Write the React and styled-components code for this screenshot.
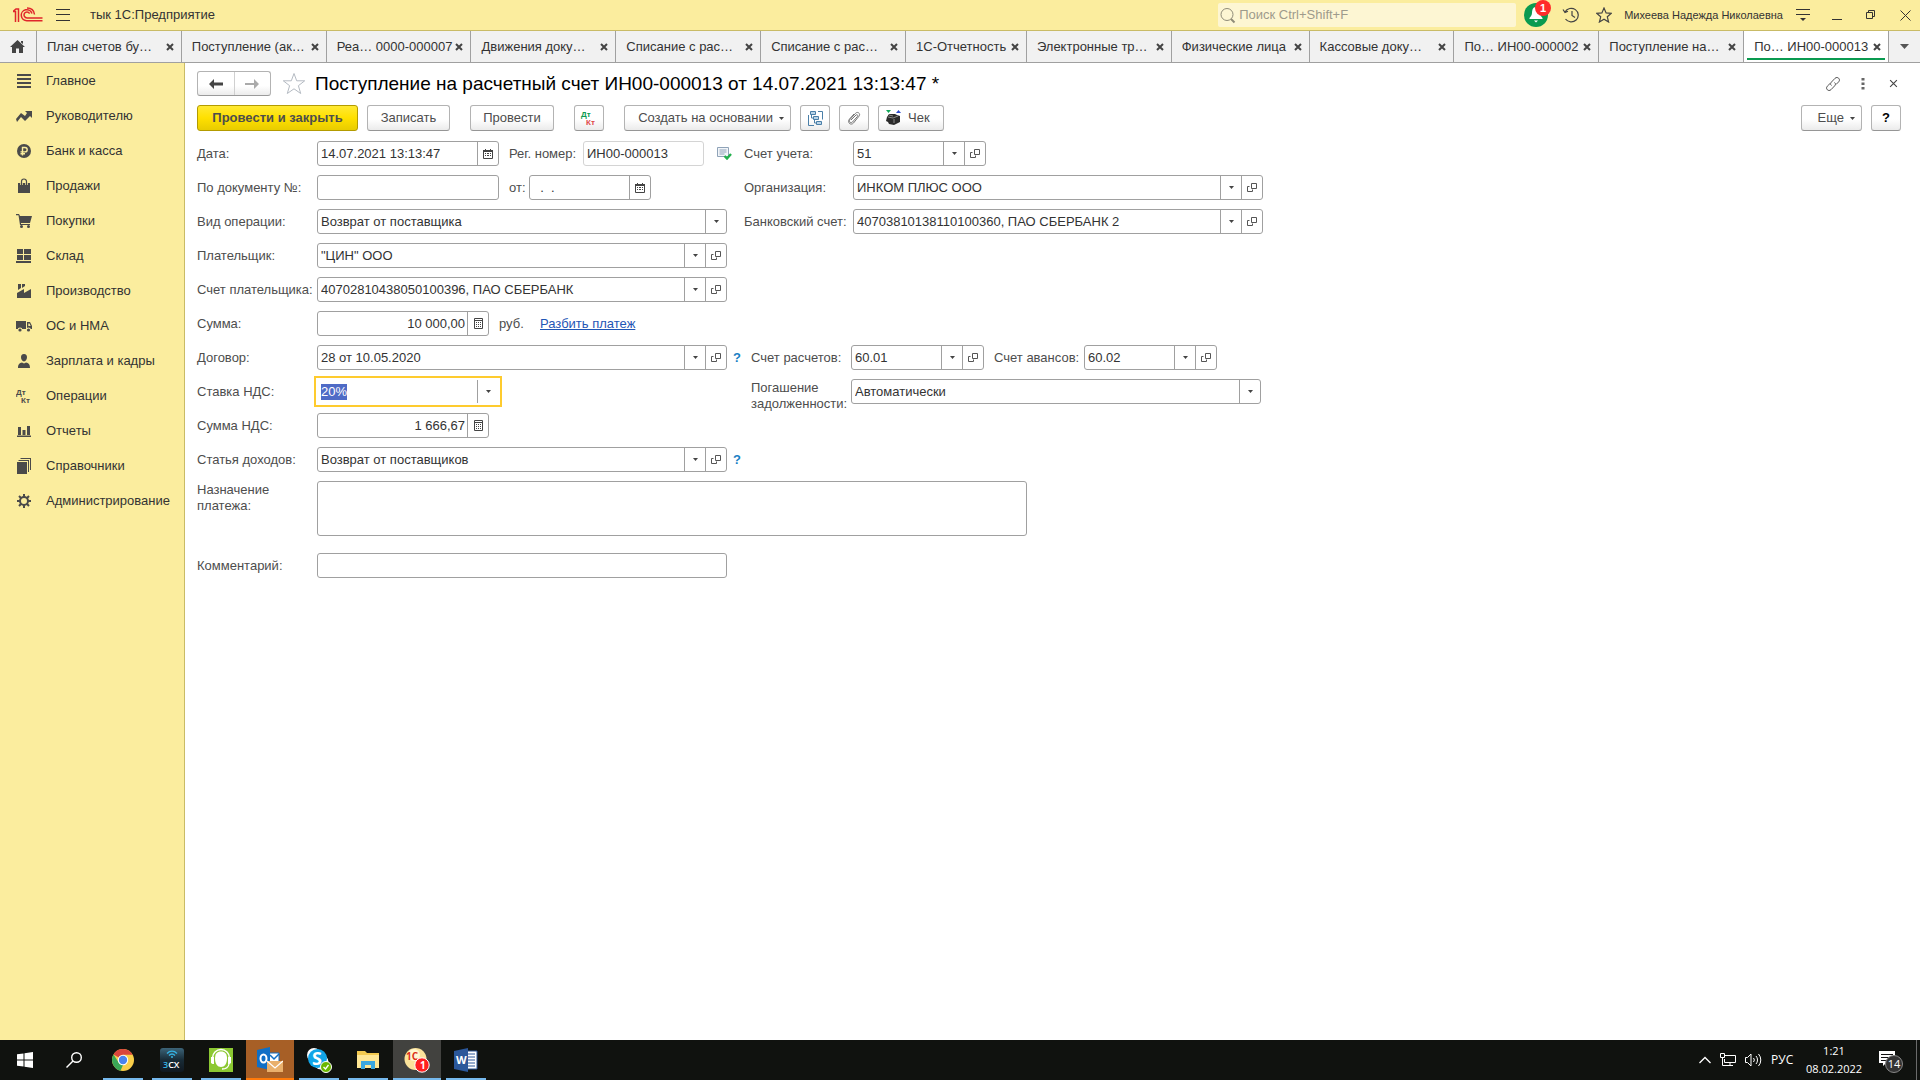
import React, { useEffect, useRef } from 'react'
import styled, { createGlobalStyle, ThemeProvider } from 'styled-components'

const theme = {
  colors: {
    yellow: '#fbed9e',
    yellowLine: '#c9bb66',
    search: '#fdf6d3',
    tab: '#f1f1f1',
    line: '#a0a0a0',
    lineLight: '#d4d4d4',
    text: '#333333',
    label: '#4d4d4d',
    icon: '#4a4a4a',
    link: '#1f56b5',
    green: '#0a9a50',
    red: '#ff2b2b',
    focus: '#fecb2e'
  }
}

const tabs = [
  { title: 'План счетов бу…', size: 145 },
  { title: 'Поступление (ак…', size: 145 },
  { title: 'Реа… 0000-000007', size: 145 },
  { title: 'Движения доку…', size: 145 },
  { title: 'Списание с рас…', size: 145 },
  { title: 'Списание с рас…', size: 145 },
  { title: '1С-Отчетность', size: 121 },
  { title: 'Электронные тр…', size: 145 },
  { title: 'Физические лица', size: 138 },
  { title: 'Кассовые доку…', size: 145 },
  { title: 'По… ИН00-000002', size: 145 },
  { title: 'Поступление на…', size: 145 },
  { title: 'По… ИН00-000013', size: 145, active: true }
]

const sections = [
  { title: 'Главное', icon: <path d='M1 1h14v2H1zM1 5h14v2H1zM1 9h14v2H1zM1 13h14v2H1z' /> },
  { title: 'Руководителю', icon: <path d='M0 11l5-6 4 3 2-3-2-2h7v7l-2-2-5 5-4-4-4 5z' /> },
  {
    title: 'Банк и касса',
    icon: (
      <>
        <circle cx='8' cy='8' r='7' />
        <path d='M6.500 12.500V4.500h2.500a2.200 2.200 0 0 1 0 4.400H4.500M4.500 10.800h4.500' fill='none' stroke='#fbed9e' strokeWidth='1.400' />
      </>
    )
  },
  {
    title: 'Продажи',
    icon: (
      <>
        <path d='M2 5h12v10H2z' />
        <path d='M5.500 7V3.500a2.500 2.500 0 0 1 5 0V7' fill='none' stroke='#fbed9e' strokeWidth='2.600' />
        <path d='M5.500 7V3.500a2.500 2.500 0 0 1 5 0V7' fill='none' stroke='#4a4a4a' strokeWidth='1.200' />
      </>
    )
  },
  {
    title: 'Покупки',
    icon: (
      <>
        <path d='M0 1h3l1 2h12l-2 7H5v1h9v1H4L2.500 2.200H0z' />
        <circle cx='5.500' cy='13.500' r='1.500' />
        <circle cx='12.500' cy='13.500' r='1.500' />
      </>
    )
  },
  { title: 'Склад', icon: <path d='M1 1h6v5H1zM8 1h7v5H8zM1 7h6v5H1zM8 7h7v5H8zM0 13h15v2H0z' /> },
  { title: 'Производство', icon: <path d='M1 15v-5l7-4v4l7-4v9zM2 1h3v4L2 7zM6 1h3v2L6 5z' /> },
  {
    title: 'ОС и НМА',
    icon: (
      <>
        <path d='M0 3h10v8H0zM11 4h3l2 4v3h-5z' />
        <circle cx='4' cy='12' r='2.400' fill='#fbed9e' />
        <circle cx='12.500' cy='12' r='2.400' fill='#fbed9e' />
        <circle cx='4' cy='12' r='1.600' />
        <circle cx='12.500' cy='12' r='1.600' />
        <path d='M12.300 5.500h1.200l1.200 2.500h-2.400z' fill='#fbed9e' />
      </>
    )
  },
  { title: 'Зарплата и кадры', icon: <path d='M8 1c2.200 0 3 1.500 3 3.300S9.800 8.500 8 8.500 5 6.200 5 4.300 5.800 1 8 1zM2 15c0-4 1.500-5 4-5.500l2 1 2-1c2.500.5 4 1.500 4 5.500z' /> },
  {
    title: 'Операции',
    icon: (
      <>
        <text x='0' y='7' fontSize='8' fontWeight='700'>Дт</text>
        <text x='5' y='15' fontSize='8' fontWeight='700'>Кт</text>
      </>
    )
  },
  { title: 'Отчеты', icon: <path d='M2 4h3v8H2zM6.500 7h3v5h-3zM11 3h3v9h-3zM1 12.500h14V14H1z' /> },
  { title: 'Справочники', icon: <path d='M1 4h10v12H1zM2.500 2h10.500v12h-1V3H2.500zM4.500 0H15v12h-1V1H4.500z' /> },
  {
    title: 'Администрирование',
    icon: (
      <>
        <circle cx='8' cy='8' r='4' fill='none' stroke='#4a4a4a' strokeWidth='2' />
        <path d='M8 1v3M8 12v3M1 8h3M12 8h3M3 3l2.200 2.200M10.800 10.800L13 13M3 13l2.200-2.200M10.800 5.200L13 3' stroke='#4a4a4a' strokeWidth='2' />
      </>
    )
  }
]

const ArrowDown = () => (
  <svg width='5' height='3' viewBox='0 0 5 3'><path d='M0 0h5L2.500 3z' fill='#444' /></svg>
)

const OpenIcon = () => (
  <svg width='11' height='11' viewBox='0 0 11 11' fill='none' stroke='#555'>
    <path d='M4.500 1.500h5v5h-5zM2.500 4.500h-2v5h5v-2' />
  </svg>
)

const CalendarIcon = () => (
  <svg width='10' height='10' viewBox='0 0 10 10'>
    <path d='M.5 2.500h9v7h-9z' fill='#fff' stroke='#444' />
    <path d='M0 1h10v2H0zM2 0h1v2H2zM7 0h1v2H7zM2 4h1v1H2zM4 4h2v1H4zM7 4h1v1H7zM2 6h1v1H2zM4 6h2v1H4zM7 6h1v1H7z' fill='#444' />
  </svg>
)

const CalcIcon = () => (
  <svg width='9' height='11' viewBox='0 0 9 11'>
    <path d='M.5.5h8v10h-8zM.5 2.500h8' fill='none' stroke='#444' />
    <path d='M2 4h1v1H2zM4 4h1v1H4zM6 4h1v1H6zM2 6h1v1H2zM4 6h1v1H4zM6 6h1v1H6zM2 8h1v1H2zM4 8h1v1H4zM6 8h1v1H6z' fill='#444' />
  </svg>
)

const CrossIcon = ({ size = 8, weight = 2 }) => (
  <svg width={size} height={size} viewBox='0 0 8 8'>
    <path d='M1 1l6 6M7 1L1 7' stroke='#444' strokeWidth={weight} />
  </svg>
)

const buttonIcons = {
  list: ['Выбрать', <ArrowDown />],
  open: ['Открыть', <OpenIcon />],
  date: ['Календарь', <CalendarIcon />],
  calc: ['Калькулятор', <CalcIcon />]
}

const Field = ({ id, label, labelWidth, width, value = '', right, muted, buttons = [] }) => (
  <>
    <Label htmlFor={id} $width={labelWidth}>{label}</Label>
    <FieldBox $width={width} $muted={muted}>
      <FieldInput id={id} defaultValue={value} $right={right} readOnly={muted} />
      {
        buttons.map(key => (
          <FieldButton key={key} type='button' aria-label={buttonIcons[key][0]}>
            {buttonIcons[key][1]}
          </FieldButton>
        ))
      }
    </FieldBox>
  </>
)

const Choice = ({ id, label, labelWidth, width, value }) => (
  <>
    <Label htmlFor={id} $width={labelWidth}>{label}</Label>
    <FieldBox $width={width}>
      <FieldSelect id={id} defaultValue={value}>
        <option>{value}</option>
      </FieldSelect>
      <SelectMark><ArrowDown /></SelectMark>
    </FieldBox>
  </>
)

const VatRate = () => {
  const input = useRef(null)

  useEffect(() => {
    input.current.focus()
    input.current.select()
  }, [])

  return (
    <>
      <Label htmlFor='vat' $width={120}>Ставка НДС:</Label>
      <FieldBox $width={182} $focused>
        <FieldInput id='vat' ref={input} defaultValue='20%' />
        <FieldButton type='button' aria-label='Выбрать'><ArrowDown /></FieldButton>
      </FieldBox>
    </>
  )
}

const TopBar = () => (
  <TopRow>
    <svg width='30' height='16' viewBox='0 0 30 16' fill='none' stroke='#e0262b' strokeWidth='1.500'>
      <path d='M0 4.500h2.500v10.500M0 4.500L3 2h2.500v13' />
      <path d='M19 6.500A5.500 5.500 0 1 0 14 13.700h15.500M16.600 6.500A3 3 0 1 0 14 11h15.500' />
      <path d='M21.500 7.500C21 3.500 18 1 14 1' />
    </svg>
    <MenuButton type='button' aria-label='Меню'>
      <svg width='14' height='12' viewBox='0 0 14 12'><path d='M0 .5h14M0 5.500h14M0 11.500h14' stroke='#333' /></svg>
    </MenuButton>
    <AppName>тык 1С:Предприятие</AppName>
    <SearchBox>
      <svg width='17' height='17' viewBox='0 0 17 17' fill='none' stroke='#8f8b78'>
        <circle cx='8' cy='7.500' r='6' />
        <path d='M12 12l3.500 3.500' strokeWidth='2' />
      </svg>
      <SearchInput type='text' aria-label='Поиск' placeholder='Поиск Ctrl+Shift+F' />
    </SearchBox>
    <TopIcons>
      <TopButton type='button' aria-label='Уведомления'>
        <svg width='28' height='28' viewBox='0 0 28 28'>
          <circle cx='14' cy='14' r='12' fill='#0a9a50' />
          <path d='M14 6c3.500 0 3.800 3.500 4 6 .2 2.500 1.500 3.500 2.500 5v1h-13v-1c1-1.500 2.300-2.500 2.500-5 .2-2.500.5-6 4-6zM12 19.500h4l-2 2z' fill='#fff' />
        </svg>
        <BellBadge>1</BellBadge>
      </TopButton>
      <TopButton type='button' aria-label='История'>
        <svg width='17' height='16' viewBox='0 0 17 16' fill='none' stroke='#444' strokeWidth='1.200'>
          <path d='M3 5a7 6.800 0 1 1 .5 7M1 2.500L3 5.500l3-1.300M10 4v4.500l3 2' />
        </svg>
      </TopButton>
      <TopButton type='button' aria-label='Избранное'>
        <svg width='16' height='16' viewBox='0 0 16 16' fill='none' stroke='#444' strokeWidth='1.200'>
          <path d='M8 1l2.100 4.900 5.200.4-4 3.500 1.300 5.200L8 12.200 3.400 15l1.300-5.200-4-3.500 5.200-.4z' />
        </svg>
      </TopButton>
    </TopIcons>
    <UserName>Михеева Надежда Николаевна</UserName>
    <TopIcons>
      <TopButton type='button' aria-label='Настройки'>
        <svg width='14' height='14' viewBox='0 0 14 14'><path d='M0 1.500h14M0 6.500h14' stroke='#333' strokeWidth='1.200' /><path d='M4 10h6l-3 3z' fill='#333' /></svg>
      </TopButton>
      <TopButton type='button' aria-label='Свернуть'>
        <svg width='10' height='12' viewBox='0 0 10 12'><path d='M0 10.500h10' stroke='#333' /></svg>
      </TopButton>
      <TopButton type='button' aria-label='Развернуть'>
        <svg width='10' height='10' viewBox='0 0 10 10' fill='none' stroke='#333'><path d='M.5 2.500h6v6h-6zM2.500 2.500v-2h6v6h-2' /></svg>
      </TopButton>
      <TopButton type='button' aria-label='Закрыть'>
        <svg width='11' height='11' viewBox='0 0 11 11'><path d='M.5.5l10 10M10.500.5l-10 10' stroke='#333' /></svg>
      </TopButton>
    </TopIcons>
  </TopRow>
)

const TabBar = () => (
  <TabRow>
    <HomeTab type='button' aria-label='Начальная страница'>
      <svg width='15' height='13' viewBox='0 0 15 13'><path d='M7.500 0L15 7h-2v6H9V8.500H6V13H2V7H0zM11 1h2v3l-2-1.500z' fill='#444' /></svg>
    </HomeTab>
    {
      tabs.map(({ title, size, active }, i) => (
        <Tab key={i} $size={size} $active={active}>
          <TabTitle type='button'>{title}</TabTitle>
          <TabClose type='button' aria-label='Закрыть вкладку'><CrossIcon /></TabClose>
        </Tab>
      ))
    }
    <MoreTabs type='button' aria-label='Все вкладки'>
      <svg width='9' height='5' viewBox='0 0 9 5'><path d='M0 0h9L4.500 5z' fill='#555' /></svg>
    </MoreTabs>
  </TabRow>
)

const Sidebar = () => (
  <SideNav>
    {
      sections.map(({ title, icon }) => (
        <SideLink key={title} href='#'>
          <svg width='16' height='16' viewBox='0 0 16 16' fill='#4a4a4a'>{icon}</svg>
          {title}
        </SideLink>
      ))
    }
  </SideNav>
)

const Toolbar = () => (
  <ToolRow>
    <ToolGroup>
      <PrimaryButton type='button' $width={161}>Провести и закрыть</PrimaryButton>
      <ToolButton type='button' $width={83}>Записать</ToolButton>
    </ToolGroup>
    <ToolButton type='button' $width={84}>Провести</ToolButton>
    <ToolButton type='button' $width={30} aria-label='Дт Кт'>
      <svg width='18' height='18' viewBox='0 0 18 18' fontSize='8' fontWeight='700'>
        <text x='1' y='8' fill='#0a9a50'>Дт</text>
        <text x='6' y='16' fill='#e04848'>Кт</text>
      </svg>
    </ToolButton>
    <ToolGroup>
      <MenuToolButton type='button' $width={167}>Создать на основании<ArrowDown /></MenuToolButton>
      <ToolButton type='button' $width={30} aria-label='Структура подчиненности'>
        <svg width='15' height='15' viewBox='0 0 15 15' fill='#b9d4e8' stroke='#4a7fa8'>
          <path d='M2.500.5h5v3h-5zM5.500 5.500h5v3h-5zM8.500 10.500h5v3h-5z' />
          <path d='M10 .5h4.500v8M.5 4v10.500H6M3.500 4v3h2M6.500 9v3h2' fill='none' />
        </svg>
      </ToolButton>
      <ToolButton type='button' $width={30} aria-label='Присоединенные файлы'>
        <svg width='14' height='14' viewBox='0 0 14 14' fill='none' stroke='#777'>
          <path d='M4 9l5-5c1-1 2.400.3 1.500 1.400L5.500 11c-1.600 1.700-4.200-.5-2.600-2.400L8.500 2.300c2.200-2.300 5.500.5 3.500 2.900L6.500 12c-2.800 3-6.800-.8-4-4L7 3' />
        </svg>
      </ToolButton>
      <IconTextButton type='button' $width={66}>
        <svg width='17' height='16' viewBox='0 0 17 16'>
          <path d='M1 0h5L3.500 3z' fill='#12a85a' />
          <path d='M11 3h5l-2.500-3z' fill='#2b49c9' />
          <path d='M2 7l2-3h6l2 1 3 1v6l-6 3-5-1-1-2-2-1z' fill='#2b2b2b' />
          <path d='M3 7l5 1 5-2M9 9v4M4 5l4 1' stroke='#8a8a8a' fill='none' />
        </svg>
        Чек
      </IconTextButton>
    </ToolGroup>
    <RightGroup>
      <MenuToolButton type='button' $width={61}>Еще<ArrowDown /></MenuToolButton>
      <ToolButton type='button' $width={30} $strong>?</ToolButton>
    </RightGroup>
  </ToolRow>
)

const Taskbar = () => (
  <TaskRow>
    <TaskItem type='button' aria-label='Пуск'>
      <svg width='16' height='16' viewBox='0 0 16 16'><path d='M0 2.300L6.500 1.400v6.100H0zM7.500 1.200L16 0v7.500H7.500zM0 8.500h6.500v6.100L0 13.700zM7.500 8.500H16V16l-8.500-1.200z' fill='#fff' /></svg>
    </TaskItem>
    <TaskItem type='button' aria-label='Поиск'>
      <svg width='16' height='16' viewBox='0 0 16 16' fill='none' stroke='#fff' strokeWidth='1.400'><circle cx='10.500' cy='5.500' r='4.800' /><path d='M7 9l-6.500 6.500' /></svg>
    </TaskItem>
    <TaskItem type='button' aria-label='Chrome' $running>
      <svg width='22' height='22' viewBox='0 0 22 22'>
        <circle cx='11' cy='11' r='11' fill='#f9ce49' />
        <path d='M11 11L1.500 5.500A11 11 0 0 1 20.600 5.800H11z' fill='#d9453d' />
        <path d='M1.500 5.500L7 14l4 2-2.500 5.700A11 11 0 0 1 1.500 5.500z' fill='#3aa757' />
        <circle cx='11' cy='11' r='5.200' fill='#fff' />
        <circle cx='11' cy='11' r='4.200' fill='#4a83ee' />
      </svg>
    </TaskItem>
    <TaskItem type='button' aria-label='3CX' $running>
      <svg width='24' height='24' viewBox='0 0 24 24'>
        <defs>
          <linearGradient id='cx' x1='0' y1='0' x2='0' y2='1'><stop offset='0' stopColor='#3c6478' /><stop offset='.5' stopColor='#182b36' /><stop offset='1' stopColor='#101820' /></linearGradient>
        </defs>
        <rect width='24' height='24' rx='3' fill='url(#cx)' />
        <path d='M7 5.500c3-3 7-3 10 0M9 7.500c2-2 4-2 6 0' fill='none' stroke='#34b3e4' strokeWidth='1.400' />
        <circle cx='12' cy='9' r='1' fill='#34b3e4' />
        <text x='3' y='20' fontSize='9' fontWeight='600' fill='#fff'><tspan fill='#34b3e4'>3</tspan>CX</text>
      </svg>
    </TaskItem>
    <TaskItem type='button' aria-label='Телефония' $running>
      <svg width='24' height='24' viewBox='0 0 24 24'>
        <path d='M0 0h24v24H0z' fill='#8cc832' />
        <path d='M12 3.500c4 0 6 2.500 6 7 0 5-2.500 8.500-6 8.500s-6-3.500-6-8.500c0-4.500 2-7 6-7z' fill='#fff' />
        <path d='M3.500 10a8.500 8.500 0 0 1 17 0' fill='none' stroke='#fff' strokeWidth='1.500' />
        <path d='M2 9h3v7H3.500L2 15zM19 9h3v6l-1.500 1H19z' fill='#fff' />
        <path d='M20 16c-.5 3-3 5-7 5' fill='none' stroke='#fff' strokeWidth='1.300' />
      </svg>
    </TaskItem>
    <TaskItem type='button' aria-label='Outlook' $running $fill='#a75f26' $bar='#ff7a0a'>
      <svg width='26' height='26' viewBox='0 0 26 26'>
        <path d='M12 6h10v11H12z' fill='#fff' stroke='#0f6fc6' />
        <path d='M13 8l4 4 5-5' fill='none' stroke='#0f6fc6' strokeWidth='1.500' />
        <path d='M0 3l13-3v23L0 20z' fill='#0f6fc6' />
        <ellipse cx='6.500' cy='11.500' rx='3' ry='4' fill='none' stroke='#fff' strokeWidth='2' />
        <path d='M10 14h16v11H10z' fill='#e9b06c' />
        <path d='M10 14l8 7 8-7' fill='none' stroke='#fff' strokeWidth='1.200' />
      </svg>
    </TaskItem>
    <TaskItem type='button' aria-label='Skype' $running>
      <svg width='26' height='26' viewBox='0 0 26 26'>
        <circle cx='8' cy='8' r='7' fill='#fff' />
        <circle cx='15' cy='15' r='7.500' fill='#fff' />
        <circle cx='11.500' cy='11.500' r='9.500' fill='#12a5e8' />
        <text x='6' y='18' fontSize='18' fontWeight='700' fill='#fff'>S</text>
        <circle cx='20' cy='20' r='5.500' fill='#6bb700' stroke='#fff' />
        <path d='M17.500 20l2 2 3-4' fill='none' stroke='#fff' strokeWidth='1.300' />
      </svg>
    </TaskItem>
    <TaskItem type='button' aria-label='Проводник' $running>
      <svg width='22' height='18' viewBox='0 0 22 18'>
        <path d='M0 0h8l2 2h12v15H0z' fill='#f3c94f' />
        <path d='M0 4h22v13H0z' fill='#ffe694' />
        <path d='M4 18v-8h14v8h-4v-4H8v4z' fill='#3ba7e0' />
      </svg>
    </TaskItem>
    <TaskItem type='button' aria-label='1С' $running $fill='#42423f'>
      <svg width='26' height='26' viewBox='0 0 26 26'>
        <circle cx='11.500' cy='12' r='11' fill='#fbe39a' />
        <circle cx='10' cy='8' r='6' fill='#fff6d0' />
        <text x='2' y='13' fontSize='10' fontWeight='700' fill='#dc3018'>1С</text>
        <circle cx='18' cy='18' r='7.200' fill='#ff2020' stroke='#fff' />
        <text x='16' y='22' fontSize='10' fontWeight='700' fill='#fff'>1</text>
      </svg>
    </TaskItem>
    <TaskItem type='button' aria-label='Word' $running>
      <svg width='24' height='24' viewBox='0 0 24 24'>
        <path d='M12 3h11v18H12z' fill='#fff' stroke='#2b579a' />
        <path d='M14 6h7M14 9h7M14 12h7M14 15h7M14 18h7' stroke='#2b579a' />
        <path d='M0 3l14-3v24L0 21z' fill='#2b579a' />
        <text x='2' y='16' fontSize='11' fontWeight='700' fill='#fff'>W</text>
      </svg>
    </TaskItem>
    <Tray>
      <svg width='12' height='8' viewBox='0 0 12 8'><path d='M.5 7L6 1.500 11.500 7' fill='none' stroke='#fff' strokeWidth='1.300' /></svg>
      <svg width='16' height='14' viewBox='0 0 16 14' fill='none' stroke='#fff'><path d='M5 2.500h10.500v7h-11V6M.5.500h4v4h-4zM2.500 4.500v8h4M10 9.500v3M6 12.500h7' /></svg>
      <svg width='17' height='14' viewBox='0 0 17 14' fill='none' stroke='#fff'><path d='M.5 4.500h2L6 1v12L2.500 9.500h-2zM8.500 5a3 3 0 0 1 0 4M11 3a6 6 0 0 1 0 8M13.500 1a9 9 0 0 1 0 12' /></svg>
      <TrayText>РУС</TrayText>
      <Clock><span>1:21</span><span>08.02.2022</span></Clock>
      <Notifications>
        <svg width='16' height='16' viewBox='0 0 16 16'><path d='M0 0h16v12H7l-3 3v-3H0z' fill='#fff' /><path d='M2 3.500h12M2 6.500h12M2 9.500h8' stroke='#111' /></svg>
        <NoteBadge>14</NoteBadge>
      </Notifications>
      <DesktopEdge />
    </Tray>
  </TaskRow>
)

const App = () => (
  <ThemeProvider theme={theme}>
    <GlobalStyle />
    <Screen>
      <TopBar />
      <TabBar />
      <Body>
        <Sidebar />
        <Main>
          <Header>
            <NavButtons>
              <NavButton type='button' aria-label='Назад'>
                <svg width='14' height='10' viewBox='0 0 14 10'><path d='M5 0v3.500h9v3H5V10L0 5z' fill='#444' /></svg>
              </NavButton>
              <NavButton type='button' aria-label='Вперед'>
                <svg width='14' height='10' viewBox='0 0 14 10'><path d='M9 0v4H0v2h9v4l5-5z' fill='#aaa' /></svg>
              </NavButton>
            </NavButtons>
            <svg width='24' height='23' viewBox='0 0 24 23' fill='none' stroke='#b4bac2'>
              <path d='M12 1.500l2.700 7.300h8l-6.300 4.900 2.300 7.800-6.700-4.700-6.700 4.700 2.300-7.800L1.300 8.800h8z' />
            </svg>
            <Title>Поступление на расчетный счет ИН00-000013 от 14.07.2021 13:13:47 *</Title>
            <HeaderIcons>
              <IconButton type='button' aria-label='Ссылка'>
                <svg width='16' height='16' viewBox='0 0 16 16' fill='none' stroke='#555'>
                  <path d='M6.500 9.500c-1.500-1-1-2.500 0-3.500L10 2.300c2.500-2.300 6 .9 3.700 3.500L11 8.500M9.500 6.500c1.500 1 1 2.500 0 3.500L6 13.700c-2.500 2.300-6-.9-3.700-3.500L5 7.500' />
                </svg>
              </IconButton>
              <IconButton type='button' aria-label='Действия'>
                <svg width='4' height='12' viewBox='0 0 4 12'><path d='M.5 0h3v2.500h-3zM.5 4.500h3V7h-3zM.5 9h3v2.500h-3z' fill='#666' /></svg>
              </IconButton>
              <IconButton type='button' aria-label='Закрыть'><CrossIcon size={9} weight={1} /></IconButton>
            </HeaderIcons>
          </Header>
          <Toolbar />
          <Form>
            <Columns>
              <Column $width={547}>
                <Row>
                  <Field id='date' label='Дата:' labelWidth={120} width={182} value='14.07.2021 13:13:47' buttons={['date']} />
                  <Gap />
                  <Field id='number' label='Рег. номер:' labelWidth={74} width={121} value='ИН00-000013' muted />
                  <Posted width='15' height='13' viewBox='0 0 15 13'>
                    <path d='M.5.5h11v9H.5z' fill='#f2f5f9' stroke='#8fa3b8' />
                    <path d='M2.500 3h7M2.500 5h7M2.500 7h5' stroke='#8fa3b8' />
                    <path d='M7.500 9l2.500 2.500L14 7' fill='none' stroke='#23b14d' strokeWidth='2.400' />
                  </Posted>
                </Row>
                <Row>
                  <Field id='doc' label='По документу №:' labelWidth={120} width={182} />
                  <Gap />
                  <Field id='docDate' label='от:' labelWidth={20} width={122} value='  .  .' buttons={['date']} />
                </Row>
                <Row>
                  <Choice id='kind' label='Вид операции:' labelWidth={120} width={410} value='Возврат от поставщика' />
                </Row>
                <Row>
                  <Field id='payer' label='Плательщик:' labelWidth={120} width={410} value='"ЦИН" ООО' buttons={['list', 'open']} />
                </Row>
                <Row>
                  <Field id='payerAccount' label='Счет плательщика:' labelWidth={120} width={410} value='40702810438050100396, ПАО СБЕРБАНК' buttons={['list', 'open']} />
                </Row>
                <Row>
                  <Field id='sum' label='Сумма:' labelWidth={120} width={172} value='10 000,00' right buttons={['calc']} />
                  <Gap />
                  <Unit>руб.</Unit>
                  <TextLink href='#'>Разбить платеж</TextLink>
                </Row>
              </Column>
              <Column>
                <Row>
                  <Field id='account' label='Счет учета:' labelWidth={109} width={133} value='51' buttons={['list', 'open']} />
                </Row>
                <Row>
                  <Field id='company' label='Организация:' labelWidth={109} width={410} value='ИНКОМ ПЛЮС ООО' buttons={['list', 'open']} />
                </Row>
                <Row>
                  <Field id='bank' label='Банковский счет:' labelWidth={109} width={410} value='40703810138110100360, ПАО СБЕРБАНК 2' buttons={['list', 'open']} />
                </Row>
              </Column>
            </Columns>
            <Columns>
              <Column $width={554}>
                <Row>
                  <Field id='contract' label='Договор:' labelWidth={120} width={410} value='28 от 10.05.2020' buttons={['list', 'open']} />
                  <Help type='button'>?</Help>
                </Row>
                <Row>
                  <VatRate />
                </Row>
                <Row>
                  <Field id='vatSum' label='Сумма НДС:' labelWidth={120} width={172} value='1 666,67' right buttons={['calc']} />
                </Row>
                <Row>
                  <Field id='income' label='Статья доходов:' labelWidth={120} width={410} value='Возврат от поставщиков' buttons={['list', 'open']} />
                  <Help type='button'>?</Help>
                </Row>
              </Column>
              <Column>
                <Row>
                  <Field id='settle' label='Счет расчетов:' labelWidth={100} width={133} value='60.01' buttons={['list', 'open']} />
                  <Gap />
                  <Field id='advance' label='Счет авансов:' labelWidth={90} width={133} value='60.02' buttons={['list', 'open']} />
                </Row>
                <TopAlignedRow>
                  <Choice id='repay' label='Погашение задолженности:' labelWidth={100} width={410} value='Автоматически' />
                </TopAlignedRow>
              </Column>
            </Columns>
            <TopAlignedRow>
              <Label htmlFor='purpose' $width={120}>Назначение<br />платежа:</Label>
              <Purpose id='purpose' />
            </TopAlignedRow>
            <CommentRow>
              <Field id='comment' label='Комментарий:' labelWidth={120} width={410} />
            </CommentRow>
          </Form>
        </Main>
      </Body>
      <Taskbar />
    </Screen>
  </ThemeProvider>
)

export default App

const GlobalStyle = createGlobalStyle`
  * {
    box-sizing: border-box;
  }
  body {
    margin: 0;
    font-family: 'Liberation Sans', Arial, sans-serif;
    font-size: 13px;
    line-height: 16px;
    color: ${({ theme }) => theme.colors.text};
  }
  button, input, select, textarea {
    font: inherit;
    color: inherit;
    margin: 0;
  }
  svg {
    flex: none;
  }
  ::selection {
    background: #4f6bc6;
    color: #fff;
  }
`
const Screen = styled.div`
  display: flex;
  flex-direction: column;
  min-height: 100vh;
`
const PlainButton = styled.button`
  display: flex;
  align-items: center;
  justify-content: center;
  border: 0;
  padding: 0;
  background: transparent;
`
const TopRow = styled.header`
  display: flex;
  align-items: center;
  height: 31px;
  padding-left: 13px;
  background: ${({ theme }) => theme.colors.yellow};
  border-bottom: 1px solid ${({ theme }) => theme.colors.yellowLine};
`
const MenuButton = styled(PlainButton)`
  width: 40px;
  height: 30px;
`
const AppName = styled.span`
  margin-left: 7px;
`
const SearchBox = styled.div`
  display: flex;
  align-items: center;
  width: 298px;
  height: 24px;
  margin: 0 5px 0 auto;
  padding-left: 1px;
  border-radius: 2px;
  background: ${({ theme }) => theme.colors.search};
`
const SearchInput = styled.input`
  flex: 1;
  min-width: 0;
  padding: 0 3px;
  border: 0;
  outline: 0;
  background: transparent;

  &::placeholder {
    color: #9e9b8c;
  }
`
const TopIcons = styled.div`
  display: flex;
  gap: 4px;
`
const TopButton = styled(PlainButton)`
  position: relative;
  width: 30px;
  height: 30px;
`
const BellBadge = styled.span`
  position: absolute;
  top: 0;
  right: 0;
  width: 16px;
  height: 16px;
  border-radius: 50%;
  background: ${({ theme }) => theme.colors.red};
  color: #fff;
  font-size: 11px;
  font-weight: 700;
  line-height: 16px;
  text-align: center;
`
const UserName = styled.span`
  margin: 0 5px;
  font-size: 11px;
  white-space: nowrap;
`
const TabRow = styled.nav`
  display: flex;
  height: 32px;
  background: ${({ theme }) => theme.colors.tab};
  border-bottom: 1px solid ${({ theme }) => theme.colors.line};
`
const HomeTab = styled(PlainButton)`
  width: 37px;
  border-right: 1px solid ${({ theme }) => theme.colors.line};
`
const Tab = styled.div`
  position: relative;
  display: flex;
  align-items: center;
  flex: 1 1 ${({ $size }) => $size}px;
  min-width: 0;
  padding: 0 7px 0 10px;
  border-right: 1px solid ${({ theme }) => theme.colors.line};
  background: ${({ $active }) => $active ? '#fff' : null};

  &::after {
    content: '';
    display: ${({ $active }) => $active ? 'block' : 'none'};
    position: absolute;
    left: 3px;
    right: 3px;
    bottom: 2px;
    height: 2px;
    background: ${({ theme }) => theme.colors.green};
  }
`
const TabTitle = styled(PlainButton)`
  flex: 1;
  min-width: 0;
  height: 100%;
  justify-content: flex-start;
  white-space: nowrap;
`
const TabClose = styled(PlainButton)`
  width: 8px;
  height: 16px;
`
const MoreTabs = styled(PlainButton)`
  width: 31px;
`
const Body = styled.div`
  display: flex;
  flex: 1;
`
const SideNav = styled.nav`
  width: 185px;
  flex: none;
  background: ${({ theme }) => theme.colors.yellow};
  border-right: 1px solid ${({ theme }) => theme.colors.yellowLine};
`
const SideLink = styled.a`
  display: flex;
  align-items: center;
  gap: 14px;
  height: 35px;
  padding-left: 16px;
  color: inherit;
  text-decoration: none;
`
const Main = styled.main`
  flex: 1;
  min-width: 0;
  padding: 8px 19px 8px 12px;
  background: #fff;
`
const Header = styled.div`
  display: flex;
  align-items: center;
  height: 25px;
`
const NavButtons = styled.div`
  display: flex;
  width: 74px;
  height: 25px;
  margin-right: 11px;
  border: 1px solid #b3b3b3;
  border-bottom-color: #9a9a9a;
  border-radius: 3px;
  background: linear-gradient(#fff 60%, #ececec);
`
const NavButton = styled(PlainButton)`
  flex: 1;

  & + & {
    border-left: 1px solid #d0d0d0;
  }
`
const Title = styled.h1`
  margin: 0 0 0 9px;
  font-size: 19px;
  font-weight: 400;
  line-height: 24px;
  color: #000;
`
const HeaderIcons = styled.div`
  display: flex;
  gap: 14px;
  margin-left: auto;
`
const IconButton = styled(PlainButton)`
  width: 16px;
  height: 24px;
`
const ToolRow = styled.div`
  display: flex;
  gap: 20px;
  margin-top: 9px;
`
const ToolGroup = styled.div`
  display: flex;
  gap: 9px;
`
const RightGroup = styled(ToolGroup)`
  margin-left: auto;
`
const ToolButton = styled.button`
  display: flex;
  align-items: center;
  justify-content: center;
  gap: 6px;
  width: ${({ $width }) => $width}px;
  height: 26px;
  padding: 0;
  border: 1px solid #b3b3b3;
  border-bottom-color: #969696;
  border-radius: 3px;
  background: linear-gradient(#fff 55%, #ebebeb);
  color: ${({ theme, $strong }) => $strong ? '#000' : theme.colors.label};
  font-weight: ${({ $strong }) => $strong ? 700 : 400};
  white-space: nowrap;
`
const PrimaryButton = styled(ToolButton)`
  border-color: #b39b00;
  background: linear-gradient(#ffe933, #ffe000 50%, #e8cc00);
  font-weight: 700;
`
const MenuToolButton = styled(ToolButton)`
  justify-content: flex-end;
  padding-right: 6px;
`
const IconTextButton = styled(ToolButton)`
  justify-content: flex-start;
  padding-left: 6px;
`
const Form = styled.form`
  display: flex;
  flex-direction: column;
  gap: 9px;
  margin-top: 10px;
`
const Columns = styled.div`
  display: flex;
`
const Column = styled.div`
  display: flex;
  flex-direction: column;
  gap: 9px;
  width: ${({ $width }) => $width ? `${$width}px` : 'auto'};
`
const Row = styled.div`
  display: flex;
  align-items: center;
`
const TopAlignedRow = styled(Row)`
  align-items: flex-start;

  > label {
    padding-top: 1px;
  }
`
const CommentRow = styled(Row)`
  margin-top: 8px;
`
const Gap = styled.span`
  width: 10px;
`
const Label = styled.label`
  flex: none;
  width: ${({ $width }) => $width}px;
  color: ${({ theme }) => theme.colors.label};
`
const FieldBox = styled.span`
  position: relative;
  display: flex;
  flex: none;
  width: ${({ $width }) => $width}px;
  height: 25px;
  border: 1px solid ${({ theme, $muted, $focused }) => $focused ? 'transparent' : $muted ? theme.colors.lineLight : theme.colors.line};
  border-radius: ${({ $focused }) => $focused ? 0 : 3}px;
  outline: ${({ theme, $focused }) => $focused ? `2px solid ${theme.colors.focus}` : 'none'};
  outline-offset: 1px;
  background: #fff;
`
const FieldInput = styled.input`
  flex: 1;
  min-width: 0;
  padding: 0 2px 0 3px;
  border: 0;
  outline: 0;
  background: transparent;
  text-align: ${({ $right }) => $right ? 'right' : 'left'};
  white-space: pre;
`
const FieldSelect = styled.select`
  flex: 1;
  min-width: 0;
  padding: 0 24px 0 3px;
  border: 0;
  outline: 0;
  appearance: none;
  background: transparent;
`
const FieldButton = styled(PlainButton)`
  flex: none;
  width: 21px;
  border-left: 1px solid ${({ theme }) => theme.colors.line};
`
const SelectMark = styled.span`
  position: absolute;
  top: 0;
  right: 0;
  bottom: 0;
  display: flex;
  align-items: center;
  justify-content: center;
  width: 21px;
  border-left: 1px solid ${({ theme }) => theme.colors.line};
  pointer-events: none;
`
const Posted = styled.svg`
  margin-left: 13px;
`
const Unit = styled.span`
  width: 41px;
  color: ${({ theme }) => theme.colors.label};
`
const TextLink = styled.a`
  color: ${({ theme }) => theme.colors.link};
`
const Help = styled(PlainButton)`
  width: 20px;
  color: #1a7fc4;
  font-weight: 700;
`
const Purpose = styled.textarea`
  width: 710px;
  height: 55px;
  padding: 3px;
  border: 1px solid ${({ theme }) => theme.colors.line};
  border-radius: 3px;
  resize: none;
`
const TaskRow = styled.footer`
  display: flex;
  gap: 1px;
  height: 40px;
  padding-left: 1px;
  background: #10120f;
  color: #fff;
  font-family: 'Open Sans', 'Noto Sans', sans-serif;
  font-size: 12px;
`
const TaskItem = styled(PlainButton)`
  position: relative;
  width: 48px;
  background: ${({ $fill }) => $fill || 'transparent'};

  &::after {
    content: '';
    display: ${({ $running }) => $running ? 'block' : 'none'};
    position: absolute;
    left: ${({ $fill }) => $fill ? 0 : 4}px;
    right: ${({ $fill }) => $fill ? 0 : 4}px;
    bottom: 0;
    height: 2px;
    background: ${({ $bar }) => $bar || '#76b9ed'};
  }
`
const Tray = styled.div`
  display: flex;
  align-items: center;
  gap: 9px;
  margin-left: auto;
`
const TrayText = styled.span`
  width: 24px;
`
const Clock = styled.div`
  display: flex;
  flex-direction: column;
  align-items: center;
  width: 60px;
  margin-right: 6px;
  font-size: 11px;
  line-height: 18px;
`
const Notifications = styled.div`
  position: relative;
  width: 28px;
  height: 24px;
  padding-top: 3px;
`
const NoteBadge = styled.span`
  position: absolute;
  left: 6px;
  top: 7px;
  width: 18px;
  height: 18px;
  border: 1px solid #888;
  border-radius: 50%;
  background: #333;
  font-size: 11px;
  line-height: 16px;
  text-align: center;
`
const DesktopEdge = styled.span`
  align-self: stretch;
  width: 4px;
  border-left: 1px solid #6a6a6a;
`
